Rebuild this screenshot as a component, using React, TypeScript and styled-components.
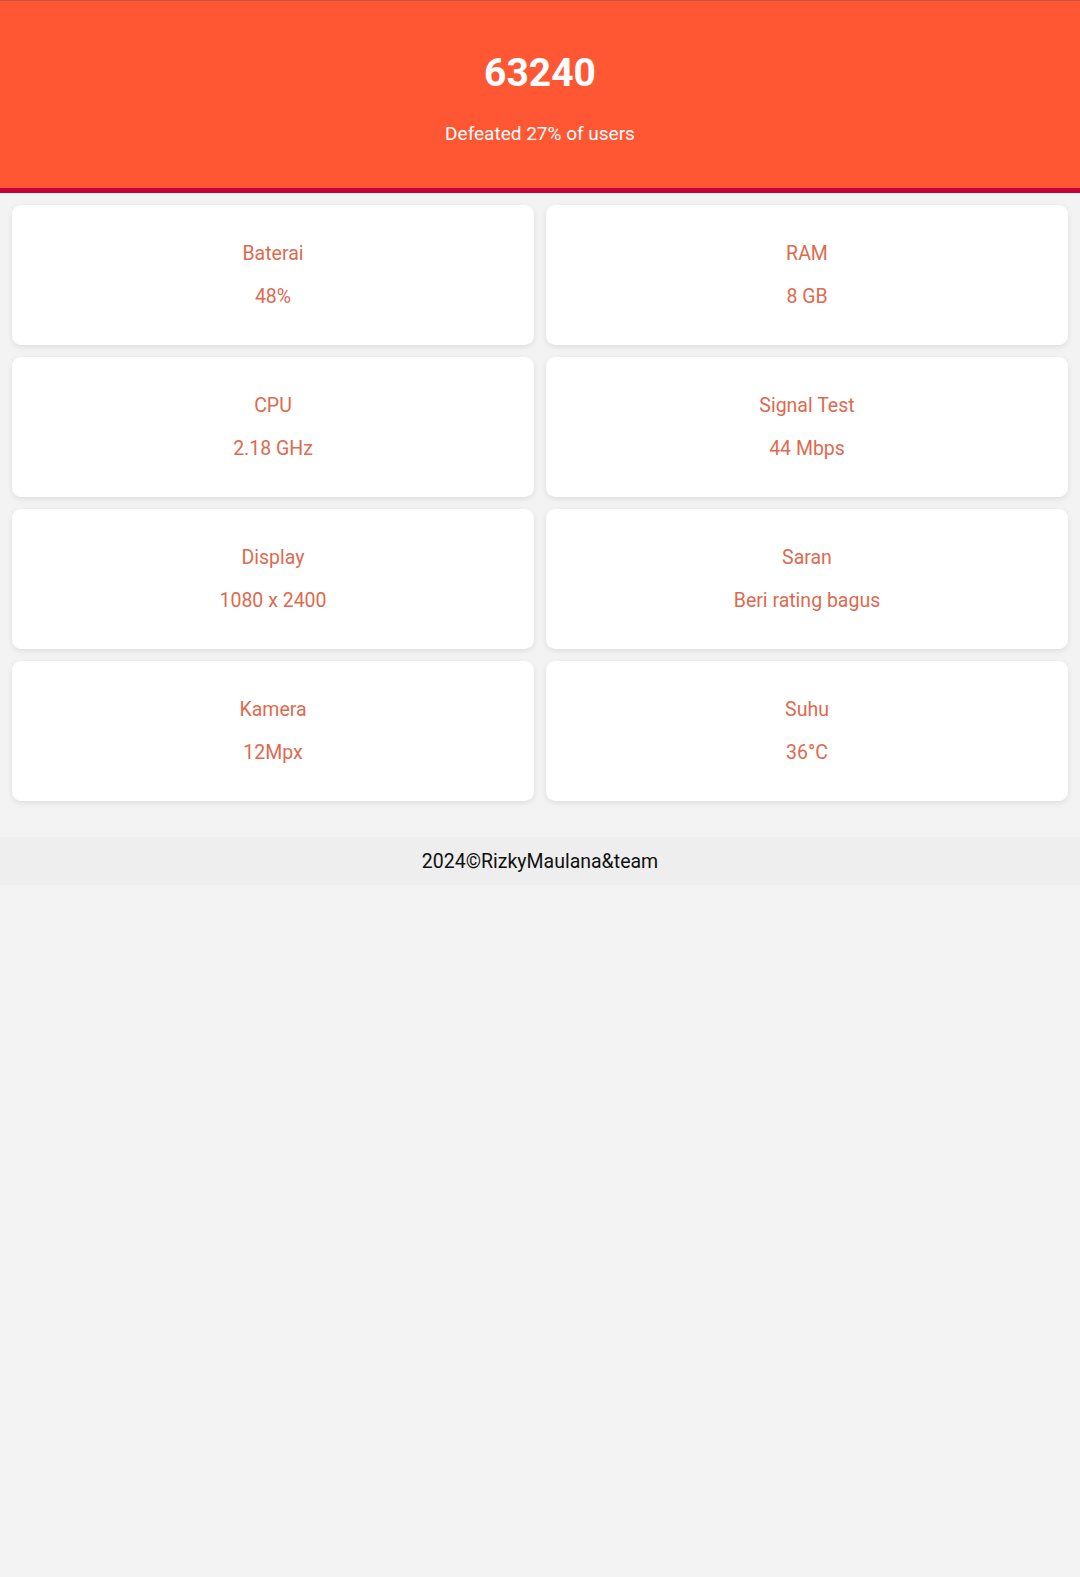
import React from "react";
import styled, { createGlobalStyle } from "styled-components";

const Global = createGlobalStyle`
  html, body { margin: 0; padding: 0; background: #f3f3f3; }
  body { font-family: Roboto, "Noto Sans", Arial, sans-serif; }
  * { box-sizing: border-box; }
`;

const Page = styled.div`
  min-height: 1577px;
  background: #f3f3f3;
`;

const Header = styled.header`
  background: #ff5733;
  border-top: 1px solid #c2553c;
  border-bottom: 5px solid #c70039;
  height: 193px;
  padding-top: 50px;
  text-align: center;
  color: #ffffff;
`;

const Score = styled.h1`
  margin: 0;
  font-size: 39px;
  line-height: 44px;
  font-weight: 700;
`;

const Sub = styled.p`
  margin: 27px 0 0;
  font-size: 19px;
  line-height: 24px;
`;

const Grid = styled.main`
  display: grid;
  grid-template-columns: 1fr 1fr;
  gap: 12px;
  padding: 12px;
`;

const Card = styled.div`
  background: #ffffff;
  border-radius: 9px;
  height: 140px;
  padding-top: 37px;
  box-shadow: 0 2px 6px rgba(0, 0, 0, 0.09);
  text-align: center;
  color: #de6a4f;
  display: flex;
  flex-direction: column;
  align-items: center;
  gap: 19px;
`;

const Line = styled.div`
  font-size: 19.5px;
  line-height: 24px;
`;

const Footer = styled.footer`
  margin-top: 24px;
  height: 48px;
  background: #eeeeee;
  display: flex;
  align-items: center;
  justify-content: center;
  font-size: 19.5px;
  color: #111111;
`;

const items = [
  ["Baterai", "48%"],
  ["RAM", "8 GB"],
  ["CPU", "2.18 GHz"],
  ["Signal Test", "44 Mbps"],
  ["Display", "1080 x 2400"],
  ["Saran", "Beri rating bagus"],
  ["Kamera", "12Mpx"],
  ["Suhu", "36°C"],
];

export default function App() {
  return (
    <Page>
      <Global />
      <Header>
        <Score>63240</Score>
        <Sub>Defeated 27% of users</Sub>
      </Header>
      <Grid>
        {items.map(([label, value]) => (
          <Card key={label}>
            <Line>{label}</Line>
            <Line>{value}</Line>
          </Card>
        ))}
      </Grid>
      <Footer>2024©RizkyMaulana&amp;team</Footer>
    </Page>
  );
}
